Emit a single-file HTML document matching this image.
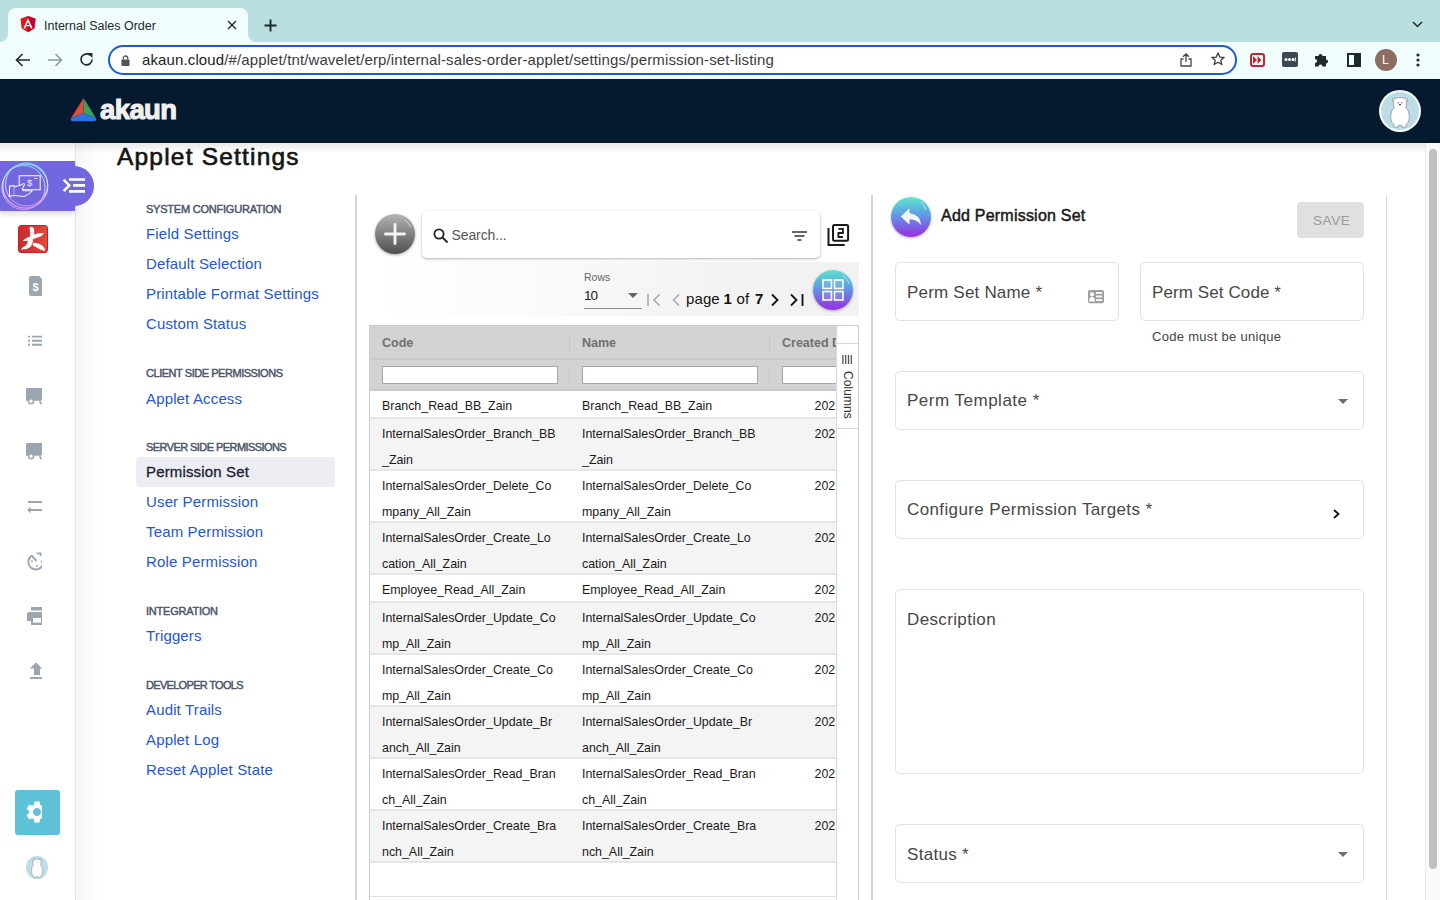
<!DOCTYPE html>
<html><head><meta charset="utf-8">
<style>
*{box-sizing:border-box;margin:0;padding:0}
html,body{width:1440px;height:900px;overflow:hidden;background:#fff;font-family:"Liberation Sans",sans-serif}
.a{position:absolute}
.t{position:absolute;line-height:1;white-space:nowrap}
svg{position:absolute;overflow:visible}
.sh{font-size:11px;font-weight:400;color:#4a5568;-webkit-text-stroke:0.45px #4a5568}
.rc{font-size:12.4px;color:#1a1a1a}
.th{font-size:12.5px;font-weight:700;color:#707070;position:absolute}
.fi{height:18px;background:#fff;border:1px solid #9fabab}
.fb{border:1px solid #e2e2e2;border-radius:5px;background:#fff}
.fl{font-size:17px;color:#474747;letter-spacing:0.2px}
.ml{font-size:15px;letter-spacing:0.15px;color:#2556d3}
</style></head><body>

<!-- ============ CHROME TAB STRIP ============ -->
<div class="a" style="left:0;top:0;width:1440px;height:42px;background:#badfdf"></div>
<div class="a" id="tab" style="left:8px;top:8px;width:240px;height:35px;background:#f1fcfc;border-radius:8px 8px 0 0"></div>
<!-- tab bottom curves -->
<div class="a" style="left:0;top:34px;width:8px;height:8px;background:#f1fcfc"></div>
<div class="a" style="left:0;top:26px;width:8px;height:16px;background:#badfdf;border-radius:0 0 8px 0"></div>
<div class="a" style="left:248px;top:34px;width:8px;height:8px;background:#f1fcfc"></div>
<div class="a" style="left:248px;top:26px;width:8px;height:16px;background:#badfdf;border-radius:0 0 0 8px"></div>

<!-- angular favicon -->
<svg style="left:20px;top:16px" width="16" height="17" viewBox="0 0 16 17">
  <path d="M8 0 L15.5 2.7 L14.3 12.6 L8 16.2 L1.7 12.6 L0.5 2.7Z" fill="#dd1b16"/>
  <path d="M8 0 L15.5 2.7 L14.3 12.6 L8 16.2Z" fill="#c3002f"/>
  <path d="M8 2.2 L3.3 12.6 H5.1 L6 10.3 H10 L10.9 12.6 H12.7 Z M8 5.9 L9.4 9 H6.6Z" fill="#fff"/>
</svg>
<div class="t" style="left:44px;top:19.5px;font-size:12.5px;color:#1f2a2a">Internal Sales Order</div>
<!-- close x -->
<svg style="left:227px;top:20px" width="10" height="10" viewBox="0 0 10 10"><path d="M1 1L9 9M9 1L1 9" stroke="#1f2a2a" stroke-width="1.4"/></svg>
<!-- plus -->
<svg style="left:264px;top:19px" width="13" height="13" viewBox="0 0 13 13"><path d="M6.5 0.5V12.5M0.5 6.5H12.5" stroke="#1a2828" stroke-width="1.9"/></svg>
<!-- chevron down right -->
<svg style="left:1412px;top:21px" width="11" height="7" viewBox="0 0 11 7"><path d="M1 1L5.5 5.5L10 1" stroke="#1f2a2a" stroke-width="1.5" fill="none"/></svg>

<!-- ============ TOOLBAR ============ -->
<div class="a" style="left:0;top:42px;width:1440px;height:37px;background:#f1fcfc"></div>
<!-- back -->
<svg style="left:14.5px;top:52.5px" width="16" height="14" viewBox="0 0 16 14"><path d="M15 7H2M7.5 1L1.5 7L7.5 13" stroke="#1f2a2a" stroke-width="1.6" fill="none"/></svg>
<!-- fwd -->
<svg style="left:46.5px;top:52.5px" width="16" height="14" viewBox="0 0 16 14"><path d="M1 7H14M8.5 1L14.5 7L8.5 13" stroke="#8a9a9a" stroke-width="1.5" fill="none"/></svg>
<!-- reload -->
<svg style="left:79px;top:52px" width="15" height="15" viewBox="0 0 15 15"><path d="M13 7.5A5.5 5.5 0 1 1 11 3.2" stroke="#1f2a2a" stroke-width="1.7" fill="none"/><path d="M8.5 1H13.5V6Z" fill="#1f2a2a"/></svg>

<!-- address bar -->
<div class="a" style="left:108px;top:45px;width:1129px;height:30px;background:#fff;border:2px solid #1b5bd4;border-radius:15px"></div>
<!-- lock -->
<svg style="left:121px;top:55px" width="9" height="11" viewBox="0 0 10 12"><path d="M2.5 5V3.5A2.5 2.5 0 0 1 7.5 3.5V5" stroke="#555" stroke-width="1.4" fill="none"/><rect x="0.5" y="5" width="9" height="7" rx="1" fill="#555"/></svg>
<div class="t" style="left:142px;top:52px;font-size:15px;letter-spacing:0.12px;color:#202124">akaun.cloud<span style="color:#3c3c3c">/#/applet/tnt/wavelet/erp/internal-sales-order-applet/settings/permission-set-listing</span></div>
<!-- share -->
<svg style="left:1180px;top:53px" width="12" height="14" viewBox="0 0 12 14"><path d="M3.5 6H1V13H11V6H8.5M6 9V1M3 3.8L6 1L9 3.8" stroke="#444" stroke-width="1.3" fill="none"/></svg>
<!-- star -->
<svg style="left:1211px;top:52px" width="14" height="14" viewBox="0 0 14 14"><path d="M7 1L8.8 5.1L13.2 5.4L9.8 8.3L10.9 12.6L7 10.3L3.1 12.6L4.2 8.3L0.8 5.4L5.2 5.1Z" stroke="#333" stroke-width="1.2" fill="none" stroke-linejoin="round"/></svg>
<!-- red ext -->
<div class="a" style="left:1250px;top:53px;width:15px;height:14px;border:2px solid #c0262d;border-radius:3px;background:#fff"></div>
<svg style="left:1253px;top:56px" width="9" height="8" viewBox="0 0 9 8"><path d="M0 0L4 4L0 8ZM4.5 0L8.5 4L4.5 8Z" fill="#c0262d"/></svg>
<!-- dark ext -->
<div class="a" style="left:1282px;top:52px;width:16px;height:15px;background:#3d4752;border-radius:2px"></div>
<svg style="left:1284px;top:57px" width="12" height="5" viewBox="0 0 12 5"><circle cx="2" cy="2.5" r="1.5" fill="#fff"/><circle cx="5.5" cy="2.5" r="1.5" fill="#fff"/><circle cx="9" cy="2.5" r="1.5" fill="#fff"/><rect x="10.8" y="0.5" width="1" height="4" fill="#fff"/></svg>
<!-- puzzle -->
<svg style="left:1314px;top:52px" width="16" height="15" viewBox="0 0 16 15"><path d="M1 4H4.5A2 2 0 1 1 8.5 4H12V7.5A2 2 0 1 1 12 11.5V14.5H8.5A2 2 0 1 0 4.5 14.5H1V11A2 2 0 1 0 1 7Z" fill="#1f2a2a"/></svg>
<!-- side panel -->
<div class="a" style="left:1347px;top:53px;width:14px;height:14px;border:2px solid #1f2a2a"></div>
<div class="a" style="left:1354px;top:53px;width:7px;height:14px;background:#1f2a2a"></div>
<!-- avatar L -->
<div class="a" style="left:1375px;top:49px;width:22px;height:22px;border-radius:50%;background:#8d6e63"></div>
<div class="t" style="left:1382px;top:54px;font-size:12px;color:#fff">L</div>
<!-- dots -->
<svg style="left:1416px;top:53px" width="4" height="14" viewBox="0 0 4 14"><circle cx="2" cy="2" r="1.6" fill="#1f2a2a"/><circle cx="2" cy="7" r="1.6" fill="#1f2a2a"/><circle cx="2" cy="12" r="1.6" fill="#1f2a2a"/></svg>

<!-- ============ APP HEADER ============ -->
<div class="a" style="left:0;top:79px;width:1440px;height:64px;background:#05192f"></div>

<!-- logo -->
<svg style="left:70px;top:97px" width="28" height="26" viewBox="70 97 28 26">
  <path d="M83.6 98 L70.8 118.6 L83.6 113Z" fill="#d9503a"/>
  <path d="M83.6 98 L96.2 118.6 L83.6 113Z" fill="#3e9e5c"/>
  <path d="M70.8 118.6 L83.6 113 L96.2 118.6 Q96.5 121.2 94 121.2 H73 Q70.5 121.2 70.8 118.6Z" fill="#2f72e4"/>
</svg>
<div class="t" style="left:100px;top:96px;font-size:27.5px;font-weight:700;color:#f0f0f0;letter-spacing:-0.6px;-webkit-text-stroke:1.1px #f0f0f0">akaun</div>
<!-- header avatar -->
<div class="a" style="left:1379px;top:90px;width:42px;height:42px;border-radius:50%;background:#fff"></div>
<div class="a" style="left:1381px;top:92px;width:38px;height:38px;border-radius:50%;background:#bcdde8;overflow:hidden">
  <svg style="left:0;top:0" width="38" height="38" viewBox="0 0 38 38"><g fill="#fff" stroke="#666" stroke-width="0.5"><circle cx="13.3" cy="8" r="2"/><circle cx="24.7" cy="8" r="2"/><path d="M12.5 10Q12.5 5.5 19 5.5Q25.5 5.5 25.5 10Q26 13.5 24.8 15.5Q28.6 18.5 28.2 26.5Q27.8 31 25.2 32.2V35.2H21.2L20.8 33.5H17.2L16.8 35.2H12.8V32.2Q10.2 31 9.8 26.5Q9.4 18.5 13.2 15.5Q12 13.5 12.5 10Z"/></g><circle cx="17" cy="10.8" r="0.6" fill="#222"/><circle cx="21" cy="10.8" r="0.6" fill="#222"/><ellipse cx="19" cy="12.8" rx="1" ry="0.7" fill="#222"/></svg>
</div>


<!-- ============ LEFT ICON SIDEBAR ============ -->
<div class="a" style="left:0;top:143px;width:75px;height:757px;background:#fff"></div>
<div class="a" style="left:75px;top:143px;width:30px;height:757px;background:linear-gradient(90deg,#e4e4e4 0,#e4e4e4 1px,#f7f7f7 1px,#f9f9f9 8px,#fdfdfd 18px,#fff 28px)"></div>
<!-- header shadow -->

<div class="a" style="left:0;top:143px;width:1425px;height:10px;background:linear-gradient(rgba(0,0,0,0.09),rgba(0,0,0,0))"></div>
<!-- purple pill -->
<div class="a" style="left:0;top:161px;width:75px;height:50px;background:#7367df;box-shadow:0 3px 6px rgba(0,0,0,0.15)"></div>
<div class="a" style="left:54px;top:166px;width:40px;height:40px;border-radius:20px;background:#7367df"></div>
<svg style="left:0;top:155px" width="60" height="60" viewBox="0 155 60 60">
  <defs><linearGradient id="rg" x1="0" y1="0" x2="0" y2="1"><stop offset="0" stop-color="#8ae6f2"/><stop offset="0.45" stop-color="#d8e8f8"/><stop offset="1" stop-color="#e79cf2"/></linearGradient></defs>
  <g fill="none" stroke="url(#rg)">
  <ellipse cx="25.3" cy="186" rx="22.5" ry="22" stroke-width="1.1"/>
  <ellipse cx="23.5" cy="187.5" rx="21.5" ry="22" stroke-width="0.9"/>
  <ellipse cx="26.5" cy="184.5" rx="21" ry="21.5" stroke-width="0.9"/>
  </g>
  <rect x="19.2" y="175.7" width="21" height="14" stroke="#f4f0ff" stroke-width="1.1" fill="none"/>
  <path d="M34.3 178.4H37.3" stroke="#f4f0ff" stroke-width="1"/>
  <text x="27" y="186.3" font-family="Liberation Sans" font-size="9.5" font-weight="400" fill="#f4f0ff">$</text>
  <path d="M9.5 186L14.3 185.6L14.3 195.5L9.5 196.4Z" stroke="#f4f0ff" stroke-width="1.1" fill="#7367df"/>
  <path d="M14.3 187L21.5 184.8Q24.5 182.5 24.5 184.5L22.2 189.5Q22.8 190.7 25 190.7H32.2Q30 193.8 24 196.5L14.3 195.5" stroke="#f4f0ff" stroke-width="1.1" fill="#7367df"/>
</svg>
<!-- menu-open icon -->
<svg style="left:62px;top:176px" width="24" height="18" viewBox="0 0 24 18">
  <path d="M1.6 3.6L7.3 9.4L1.6 15.2" stroke="#fff" stroke-width="2.5" fill="none"/>
  <path d="M7 3.5H23M11 9.4H23M7 15.4H23" stroke="#fff" stroke-width="2.6"/>
</svg>

<!-- red app icon -->
<div class="a" style="left:18px;top:224.5px;width:30px;height:28.5px;border-radius:3px;background:linear-gradient(90deg,#c52c2e,#d93a35 60%,#e14a3b);border:1px solid #d01c1c"></div>
<svg style="left:18px;top:224.5px" width="30" height="29" viewBox="0 0 30 29">
  <path d="M12 2.5Q14.5 1.5 15.5 3.5L15.8 8.5Q14.5 11 15 13Q14.5 18 12.5 21.5Q9 24.5 3.5 24Q5 22 8 21Q10 19 10.5 15Q8.5 15.8 5.5 15.5Q9 12.5 12.5 12Q13 8 12 2.5Z" fill="#fff" stroke="#fff" stroke-width="0.9" stroke-linejoin="round"/>
  <path d="M14.5 10.5Q20 8 25.5 8.5Q24 11 20 12Q17 13 14.5 13.8Z" fill="#fff" stroke="#fff" stroke-width="0.8" stroke-linejoin="round"/>
  <path d="M15.5 18Q21 18.5 24.5 21Q27 24 26.5 25.5Q22 24.5 15 20Z" fill="#fff" stroke="#fff" stroke-width="0.8" stroke-linejoin="round"/>
</svg>

<!-- gray sidebar icons (clipped) -->
<div class="a" style="left:0;top:143px;width:42px;height:640px;overflow:hidden">
  <!-- receipt -->
  <svg style="left:29px;top:133px" width="15" height="20" viewBox="0 0 15 20"><path d="M2 0H10L15 5V18Q15 20 13 20H2Q0 20 0 18V2Q0 0 2 0Z" fill="#9aa6b0"/><text x="3.5" y="15" font-family="Liberation Sans" font-size="11" font-weight="700" fill="#fff">$</text></svg>
  <!-- list -->
  <svg style="left:28px;top:193px" width="16" height="11" viewBox="0 0 16 11"><path d="M0 0.6H2M0 4.7H2M0 8.8H2M4 0.6H16M4 4.7H16M4 8.8H16" stroke="#9aa6b0" stroke-width="1.9"/></svg>
  <!-- truck -->
  <svg style="left:26px;top:245px" width="20" height="17" viewBox="0 0 20 17"><path d="M0 1.2Q0 0 1.2 0H20V12.8H0Z" fill="#9aa6b0"/><circle cx="5" cy="13.2" r="2.5" fill="#fff" stroke="#9aa6b0" stroke-width="1.5"/><circle cx="16.5" cy="13.2" r="2.5" fill="#fff" stroke="#9aa6b0" stroke-width="1.5"/></svg>
  <svg style="left:26px;top:300px" width="20" height="17" viewBox="0 0 20 17"><path d="M0 1.2Q0 0 1.2 0H20V12.8H0Z" fill="#9aa6b0"/><circle cx="5" cy="13.2" r="2.5" fill="#fff" stroke="#9aa6b0" stroke-width="1.5"/><circle cx="16.5" cy="13.2" r="2.5" fill="#fff" stroke="#9aa6b0" stroke-width="1.5"/></svg>
  <!-- arrows -->
  <svg style="left:0;top:0" width="45" height="440" viewBox="0 143 45 440"><rect x="28" y="501" width="15" height="2" fill="#9aa6b0"/><rect x="30" y="509" width="13" height="2" fill="#9aa6b0"/><path d="M27.3 510L30.5 506.5V513.5Z" fill="#9aa6b0"/></svg>
  <!-- speed -->
  <svg style="left:0;top:0" width="45" height="440" viewBox="0 143 45 440"><path d="M31.8 555.5A7.6 7.6 0 1 0 42.6 565.5" stroke="#9aa6b0" stroke-width="1.9" fill="none"/><path d="M31.6 555.6L36.6 561" stroke="#9aa6b0" stroke-width="1.9"/><path d="M36.5 553.3H40.6V556" stroke="#9aa6b0" stroke-width="1.8" fill="none"/><circle cx="32" cy="561.3" r="0.95" fill="#9aa6b0"/><circle cx="37" cy="566" r="0.95" fill="#9aa6b0"/><circle cx="41.6" cy="561.3" r="0.95" fill="#9aa6b0"/></svg>
  <!-- printer -->
  <svg style="left:0;top:0" width="45" height="600" viewBox="0 143 45 600"><rect x="31" y="607" width="11" height="3.5" fill="#9aa6b0"/><path d="M27 614Q27 612 29 612H42V625H31V621H27Z" fill="#9aa6b0"/><rect x="33" y="618" width="8" height="4.6" fill="#fff"/></svg>
  <!-- upload -->
  <svg style="left:0;top:0" width="45" height="600" viewBox="0 143 45 600"><path d="M36 662.3L42.3 668.6H40V675H34V668.6H29.7Z" fill="#9aa6b0"/><rect x="30" y="677" width="12" height="2" fill="#9aa6b0"/></svg>
</div>

<!-- gear button -->
<div class="a" style="left:15px;top:790px;width:45px;height:45px;border-radius:3px;background:#5ec2d8"></div>
<div class="a" style="left:20px;top:795px;width:22px;height:35px;overflow:hidden"><svg style="left:-20px;top:-795px" width="60" height="840" viewBox="0 0 60 840"><g transform="translate(23.8 798.8) scale(1.1)"><path fill="#fff" fill-rule="evenodd" d="M19.14,12.94c0.04-0.3,0.06-0.61,0.06-0.94c0-0.32-0.02-0.64-0.07-0.94l2.03-1.58c0.18-0.14,0.23-0.41,0.12-0.61 l-1.92-3.32c-0.12-0.22-0.37-0.29-0.59-0.22l-2.39,0.96c-0.5-0.38-1.03-0.7-1.62-0.94L14.4,2.81c-0.04-0.24-0.24-0.41-0.48-0.41 h-3.84c-0.24,0-0.43,0.17-0.47,0.41L9.25,5.35C8.66,5.59,8.12,5.92,7.63,6.29L5.24,5.33c-0.22-0.08-0.47,0-0.59,0.22L2.74,8.87 C2.62,9.08,2.66,9.34,2.86,9.48l2.03,1.58C4.84,11.36,4.8,11.69,4.8,12s0.02,0.64,0.07,0.94l-2.03,1.58 c-0.18,0.14-0.23,0.41-0.12,0.61l1.92,3.32c0.12,0.22,0.37,0.29,0.59,0.22l2.39-0.96c0.5,0.38,1.03,0.7,1.62,0.94l0.36,2.54 c0.05,0.24,0.24,0.41,0.48,0.41h3.84c0.24,0,0.44-0.17,0.47-0.41l0.36-2.54c0.59-0.24,1.13-0.56,1.62-0.94l2.39,0.96 c0.22,0.08,0.47,0,0.59-0.22l1.92-3.32c0.12-0.22,0.07-0.47-0.12-0.61L19.14,12.94z M12,15.6c-1.98,0-3.6-1.62-3.6-3.6 s1.62-3.6,3.6-3.6s3.6,1.62,3.6,3.6S13.98,15.6,12,15.6z"/></g></svg></div>
<!-- small avatar -->
<div class="a" style="left:26px;top:856px;width:22px;height:23px;border-radius:50%;background:#bcdde8;overflow:hidden">
 <svg style="left:0;top:0" width="22" height="23" viewBox="0 0 22 23"><g fill="#fff" stroke="#777" stroke-width="0.45"><circle cx="7.8" cy="4.2" r="1.3"/><circle cx="14.2" cy="4.2" r="1.3"/><path d="M7 5.5Q7 3 11 3Q15 3 15 5.5Q15.3 7.5 14.5 8.8Q16.8 10.5 16.5 16Q16.2 19 14.8 19.8V21.5H12.3L12 20.5H10L9.7 21.5H7.2V19.8Q5.8 19 5.5 16Q5.2 10.5 7.5 8.8Q6.7 7.5 7 5.5Z"/></g><circle cx="9.6" cy="6" r="0.35" fill="#333"/><circle cx="12.4" cy="6" r="0.35" fill="#333"/></svg>
</div>

<!-- ============ PAGE CONTENT ============ -->
<div class="t" style="left:117px;top:144.9px;font-size:24.5px;font-weight:400;letter-spacing:1.2px;color:#141414;-webkit-text-stroke:0.65px #141414">Applet Settings</div>

<!-- settings menu -->
<div class="t sh" style="left:146px;top:203.9px;letter-spacing:-0.22px">SYSTEM CONFIGURATION</div>
<div class="t ml" style="left:146px;top:225.5px">Field Settings</div>
<div class="t ml" style="left:146px;top:255.5px">Default Selection</div>
<div class="t ml" style="left:146px;top:285.5px">Printable Format Settings</div>
<div class="t ml" style="left:146px;top:315.5px">Custom Status</div>
<div class="t sh" style="left:146px;top:367.9px;letter-spacing:-0.46px">CLIENT SIDE PERMISSIONS</div>
<div class="t ml" style="left:146px;top:390.5px">Applet Access</div>
<div class="t sh" style="left:146px;top:441.9px;letter-spacing:-0.57px">SERVER SIDE PERMISSIONS</div>
<div class="a" style="left:136px;top:457px;width:199px;height:30px;border-radius:4px;background:#ebedf2"></div>
<div class="t ml" style="left:146px;top:463.5px;color:#1a2233;-webkit-text-stroke:0.3px #1a2233">Permission Set</div>
<div class="t ml" style="left:146px;top:493.5px">User Permission</div>
<div class="t ml" style="left:146px;top:523.5px">Team Permission</div>
<div class="t ml" style="left:146px;top:553.5px">Role Permission</div>
<div class="t sh" style="left:146px;top:605.9px;letter-spacing:-0.23px">INTEGRATION</div>
<div class="t ml" style="left:146px;top:627.5px">Triggers</div>
<div class="t sh" style="left:146px;top:679.9px;letter-spacing:-0.69px">DEVELOPER TOOLS</div>
<div class="t ml" style="left:146px;top:701.5px">Audit Trails</div>
<div class="t ml" style="left:146px;top:731.5px">Applet Log</div>
<div class="t ml" style="left:146px;top:761.5px">Reset Applet State</div>


<!-- ============ TABLE PANEL ============ -->
<!-- plus button -->
<div class="a" style="left:375px;top:214px;width:40px;height:40px;border-radius:50%;background:linear-gradient(#b4b4b4,#4e4e4e);box-shadow:0 1px 3px rgba(0,0,0,0.35)"></div>
<svg style="left:375px;top:214px" width="40" height="40" viewBox="0 0 40 40"><path d="M30 6 Q34 9 36 13" stroke="#e8e8e8" stroke-width="0.8" fill="none"/><path d="M20 10.5V29.5M10.5 20H29.5" stroke="#f4f4f4" stroke-width="2.9" stroke-linecap="round"/></svg>
<!-- search box -->
<div class="a" style="left:422px;top:210.5px;width:398px;height:47.5px;border-radius:5px;background:#fff;box-shadow:0 1px 3px rgba(0,0,0,0.3)"></div>
<svg style="left:433px;top:228px" width="16" height="16" viewBox="0 0 16 16"><circle cx="6" cy="6" r="4.6" stroke="#222" stroke-width="1.8" fill="none"/><path d="M9.4 9.4L14.5 14.5" stroke="#222" stroke-width="2"/></svg>
<div class="t" style="left:451.5px;top:227.8px;font-size:14px;letter-spacing:-0.1px;color:#555">Search...</div>
<svg style="left:792px;top:231px" width="15" height="10" viewBox="0 0 15 10"><path d="M0 1H15M2.5 5H12.5M5.5 9H9.5" stroke="#333" stroke-width="1.6"/></svg>
<svg style="left:827px;top:223px" width="24" height="24" viewBox="0 0 24 24"><path d="M1.5 5.1V21.9H17.7" stroke="#1a1a1a" stroke-width="2" fill="none"/><rect x="6" y="2.1" width="15.1" height="15.6" rx="1.5" stroke="#1a1a1a" stroke-width="2" fill="none"/><path d="M11.4 5.8H15.9V10H11.4V14H15.9" stroke="#1a1a1a" stroke-width="1.8" fill="none"/></svg>

<!-- pagination band -->
<div class="a" style="left:370px;top:262px;width:489px;height:54px;background:linear-gradient(90deg,#ffffff 0%,#fbfbfb 30%,#f3f3f3 70%,#f2f2f2 100%)"></div>
<div class="t" style="left:584px;top:272px;font-size:10.5px;color:#666">Rows</div>
<div class="t" style="left:584px;top:288.8px;font-size:13.5px;letter-spacing:-1px;color:#222">10</div>
<div class="a" style="left:584px;top:308px;width:58px;height:1px;background:#8a8a8a"></div>
<svg style="left:628px;top:293px" width="10" height="5" viewBox="0 0 10 5"><path d="M0 0H10L5 5Z" fill="#666"/></svg>
<svg style="left:647px;top:293px" width="14" height="14" viewBox="0 0 14 14"><path d="M1 1V13M12.5 1.5L7 7L12.5 12.5" stroke="#aaa" stroke-width="1.6" fill="none"/></svg>
<svg style="left:672px;top:293px" width="8" height="14" viewBox="0 0 8 14"><path d="M7 1.5L1.5 7L7 12.5" stroke="#aaa" stroke-width="1.6" fill="none"/></svg>
<div class="t" style="left:686px;top:290.8px;font-size:15px;letter-spacing:0.1px;color:#111">page</div>
<div class="t" style="left:723.5px;top:290.8px;font-size:15px;font-weight:700;color:#111">1</div>
<div class="t" style="left:736.5px;top:290.8px;font-size:15px;letter-spacing:0.2px;color:#111">of</div>
<div class="t" style="left:755px;top:290.8px;font-size:15px;font-weight:700;color:#111">7</div>
<svg style="left:771px;top:293px" width="8" height="14" viewBox="0 0 8 14"><path d="M1 1.5L6.5 7L1 12.5" stroke="#111" stroke-width="1.8" fill="none"/></svg>
<svg style="left:790px;top:293px" width="14" height="14" viewBox="0 0 14 14"><path d="M1 1.5L6.5 7L1 12.5M12.5 1V13" stroke="#111" stroke-width="1.8" fill="none"/></svg>
<!-- grid button -->
<div class="a" style="left:813px;top:269.5px;width:40px;height:40px;border-radius:50%;background:linear-gradient(#5ae6c8,#5b9ae6 45%,#8f3fe0 90%,#9a36de);box-shadow:0 1px 3px rgba(0,0,0,0.3)"></div>
<svg style="left:813px;top:269.5px" width="40" height="40" viewBox="0 0 40 40"><path d="M30 5 Q35 9 36 14" stroke="#cfeff0" stroke-width="0.7" fill="none"/><g stroke="#fff" stroke-width="1.6" fill="rgba(255,255,255,0.12)"><rect x="10" y="10" width="8.5" height="8.5"/><rect x="21.5" y="10" width="8.5" height="8.5"/><rect x="10" y="21.5" width="8.5" height="8.5"/><rect x="21.5" y="21.5" width="8.5" height="8.5"/></g></svg>

<!-- table -->
<div class="a" style="left:369px;top:325px;width:490px;height:575px;border:1px solid #c8ced3;border-bottom:none;background:#fff"></div>
<div class="a" style="left:370px;top:326px;width:467px;height:34px;background:#d3d3d3;border-bottom:2px solid #c6cbce"></div>
<div class="a" style="left:370px;top:360px;width:467px;height:31px;background:#d3d3d3;border-bottom:2px solid #c6cbce"></div>
<div class="a" style="left:569px;top:334px;width:1px;height:18px;background:#c4c4c4"></div>
<div class="a" style="left:769px;top:334px;width:1px;height:18px;background:#c4c4c4"></div>
<div class="a" style="left:569px;top:367px;width:1px;height:16px;background:#c8c8c8"></div>
<div class="a" style="left:769px;top:367px;width:1px;height:16px;background:#c8c8c8"></div>
<div class="t th" style="left:382px;top:336.5px">Code</div>
<div class="t th" style="left:582px;top:336.5px">Name</div>
<div class="a" style="left:770px;top:326px;width:67px;height:32px;overflow:hidden"><div class="t th" style="left:12px;top:10.5px">Created Date</div></div>
<div class="a fi" style="left:382px;top:366px;width:176px"></div>
<div class="a fi" style="left:582px;top:366px;width:176px"></div>
<div class="a fi" style="left:782px;top:366px;width:60px;border-right:none"></div>
<div class="a" style="left:370px;top:391px;width:467px;height:509px;overflow:hidden"><div class="a" style="left:-370px;top:-391px;width:1440px;height:900px">
<div class="a" style="left:370px;top:391px;width:467px;height:28px;background:#fff;border-bottom:2px solid #e4e7e9"></div>
<div class="t rc" style="left:382px;top:400.3px">Branch_Read_BB_Zain</div>
<div class="t rc" style="left:582px;top:400.3px">Branch_Read_BB_Zain</div>
<div class="t rc" style="left:814.5px;top:400.3px">2021</div>
<div class="a" style="left:370px;top:419px;width:467px;height:52px;background:#f4f4f4;border-bottom:2px solid #e4e7e9"></div>
<div class="t rc" style="left:382px;top:428.3px">InternalSalesOrder_Branch_BB</div>
<div class="t rc" style="left:582px;top:428.3px">InternalSalesOrder_Branch_BB</div>
<div class="t rc" style="left:814.5px;top:428.3px">2021</div>
<div class="t rc" style="left:382px;top:454.3px">_Zain</div>
<div class="t rc" style="left:582px;top:454.3px">_Zain</div>
<div class="a" style="left:370px;top:471px;width:467px;height:52px;background:#fff;border-bottom:2px solid #e4e7e9"></div>
<div class="t rc" style="left:382px;top:480.3px">InternalSalesOrder_Delete_Co</div>
<div class="t rc" style="left:582px;top:480.3px">InternalSalesOrder_Delete_Co</div>
<div class="t rc" style="left:814.5px;top:480.3px">2021</div>
<div class="t rc" style="left:382px;top:506.3px">mpany_All_Zain</div>
<div class="t rc" style="left:582px;top:506.3px">mpany_All_Zain</div>
<div class="a" style="left:370px;top:523px;width:467px;height:52px;background:#f4f4f4;border-bottom:2px solid #e4e7e9"></div>
<div class="t rc" style="left:382px;top:532.3px">InternalSalesOrder_Create_Lo</div>
<div class="t rc" style="left:582px;top:532.3px">InternalSalesOrder_Create_Lo</div>
<div class="t rc" style="left:814.5px;top:532.3px">2021</div>
<div class="t rc" style="left:382px;top:558.3px">cation_All_Zain</div>
<div class="t rc" style="left:582px;top:558.3px">cation_All_Zain</div>
<div class="a" style="left:370px;top:575px;width:467px;height:28px;background:#fff;border-bottom:2px solid #e4e7e9"></div>
<div class="t rc" style="left:382px;top:584.3px">Employee_Read_All_Zain</div>
<div class="t rc" style="left:582px;top:584.3px">Employee_Read_All_Zain</div>
<div class="t rc" style="left:814.5px;top:584.3px">2021</div>
<div class="a" style="left:370px;top:603px;width:467px;height:52px;background:#f4f4f4;border-bottom:2px solid #e4e7e9"></div>
<div class="t rc" style="left:382px;top:612.3px">InternalSalesOrder_Update_Co</div>
<div class="t rc" style="left:582px;top:612.3px">InternalSalesOrder_Update_Co</div>
<div class="t rc" style="left:814.5px;top:612.3px">2021</div>
<div class="t rc" style="left:382px;top:638.3px">mp_All_Zain</div>
<div class="t rc" style="left:582px;top:638.3px">mp_All_Zain</div>
<div class="a" style="left:370px;top:655px;width:467px;height:52px;background:#fff;border-bottom:2px solid #e4e7e9"></div>
<div class="t rc" style="left:382px;top:664.3px">InternalSalesOrder_Create_Co</div>
<div class="t rc" style="left:582px;top:664.3px">InternalSalesOrder_Create_Co</div>
<div class="t rc" style="left:814.5px;top:664.3px">2021</div>
<div class="t rc" style="left:382px;top:690.3px">mp_All_Zain</div>
<div class="t rc" style="left:582px;top:690.3px">mp_All_Zain</div>
<div class="a" style="left:370px;top:707px;width:467px;height:52px;background:#f4f4f4;border-bottom:2px solid #e4e7e9"></div>
<div class="t rc" style="left:382px;top:716.3px">InternalSalesOrder_Update_Br</div>
<div class="t rc" style="left:582px;top:716.3px">InternalSalesOrder_Update_Br</div>
<div class="t rc" style="left:814.5px;top:716.3px">2021</div>
<div class="t rc" style="left:382px;top:742.3px">anch_All_Zain</div>
<div class="t rc" style="left:582px;top:742.3px">anch_All_Zain</div>
<div class="a" style="left:370px;top:759px;width:467px;height:52px;background:#fff;border-bottom:2px solid #e4e7e9"></div>
<div class="t rc" style="left:382px;top:768.3px">InternalSalesOrder_Read_Bran</div>
<div class="t rc" style="left:582px;top:768.3px">InternalSalesOrder_Read_Bran</div>
<div class="t rc" style="left:814.5px;top:768.3px">2021</div>
<div class="t rc" style="left:382px;top:794.3px">ch_All_Zain</div>
<div class="t rc" style="left:582px;top:794.3px">ch_All_Zain</div>
<div class="a" style="left:370px;top:811px;width:467px;height:52px;background:#f4f4f4;border-bottom:2px solid #e4e7e9"></div>
<div class="t rc" style="left:382px;top:820.3px">InternalSalesOrder_Create_Bra</div>
<div class="t rc" style="left:582px;top:820.3px">InternalSalesOrder_Create_Bra</div>
<div class="t rc" style="left:814.5px;top:820.3px">2021</div>
<div class="t rc" style="left:382px;top:846.3px">nch_All_Zain</div>
<div class="t rc" style="left:582px;top:846.3px">nch_All_Zain</div>
</div></div>
<!-- empty row + bottom line -->
<div class="a" style="left:370px;top:896px;width:467px;height:1px;background:#dde1e4"></div>
<!-- columns side panel -->
<div class="a" style="left:836px;top:326px;width:22px;height:574px;background:#fff;border-left:1px solid #d5dadd"></div>
<div class="a" style="left:836px;top:343px;width:22px;height:86px;border-top:1px solid #d5dadd;border-bottom:1px solid #d5dadd"></div>
<svg style="left:842px;top:355px" width="11" height="9" viewBox="0 0 11 9"><path d="M0.9 0V9M3.7 0V9M6.5 0V9M9.3 0V9" stroke="#555" stroke-width="1.3"/></svg>
<div class="t" style="left:842px;top:371px;font-size:12px;color:#333;writing-mode:vertical-rl;letter-spacing:0.05px">Columns</div>

<!-- ============ FORM PANEL ============ -->
<div class="a" style="left:891px;top:197px;width:40px;height:40px;border-radius:50%;background:linear-gradient(#5ee8cc,#5f9ae6 45%,#8f3fe0 90%,#9a36de);box-shadow:0 1px 3px rgba(0,0,0,0.3)"></div>
<svg style="left:891px;top:197px" width="40" height="40" viewBox="0 0 40 40"><path d="M29.5 5 Q33.5 8 35 13" stroke="#9ff0f0" stroke-width="1" fill="none"/><path d="M18.5 11.3 L9.8 19.5 L18.5 27.7 V22.3 Q25.5 22 30.3 28.3 Q29.5 17.5 18.5 16.3Z" fill="#f4f4f4"/></svg>
<div class="t" style="left:941px;top:207.5px;font-size:16px;font-weight:400;letter-spacing:0.22px;color:#1a1a1a;-webkit-text-stroke:0.5px #1a1a1a">Add Permission Set</div>
<div class="a" style="left:1297px;top:202px;width:67px;height:36px;border-radius:4px;background:#e0e0e0"></div>
<div class="t" style="left:1313px;top:213.7px;font-size:13.5px;letter-spacing:0.6px;color:#9a9a9a">SAVE</div>

<div class="a fb" style="left:895px;top:262px;width:224px;height:59px"></div>
<div class="t fl" style="left:907px;top:283.7px">Perm Set Name *</div>
<svg style="left:1088px;top:290px" width="16" height="13" viewBox="0 0 16 13"><rect x="0" y="0" width="16" height="13.2" rx="2" fill="#9e9e9e"/><circle cx="4" cy="4.3" r="2.1" fill="#fff"/><path d="M1.1 11.4Q1.1 7.1 4 7.1Q6.9 7.1 6.9 11.4Z" fill="#fff"/><rect x="8" y="2" width="6.2" height="1.8" fill="#fff"/><rect x="8" y="5.6" width="6.2" height="1.8" fill="#fff"/><rect x="8" y="9.2" width="6.2" height="1.8" fill="#fff"/></svg>
<div class="a fb" style="left:1140px;top:262px;width:224px;height:59px"></div>
<div class="t fl" style="left:1152px;top:283.7px;letter-spacing:0.1px">Perm Set Code *</div>
<div class="t" style="left:1152px;top:330px;font-size:13px;letter-spacing:0.3px;color:#444">Code must be unique</div>

<div class="a fb" style="left:895px;top:371px;width:469px;height:59px"></div>
<div class="t fl" style="left:907px;top:392.4px;letter-spacing:0.5px">Perm Template *</div>
<svg style="left:1338px;top:398.5px" width="10" height="5" viewBox="0 0 10 5"><path d="M0 0H10L5 5Z" fill="#707070"/></svg>

<div class="a fb" style="left:895px;top:480px;width:469px;height:59px"></div>
<div class="t fl" style="left:907px;top:501.2px;letter-spacing:0.38px">Configure Permission Targets *</div>
<svg style="left:1333px;top:509px" width="7" height="10" viewBox="0 0 7 10"><path d="M1 1L5.5 5L1 9" stroke="#111" stroke-width="1.8" fill="none"/></svg>

<div class="a fb" style="left:895px;top:589px;width:469px;height:185px"></div>
<div class="t fl" style="left:907px;top:611.2px;letter-spacing:0.36px">Description</div>

<div class="a fb" style="left:895px;top:824px;width:469px;height:59px"></div>
<div class="t fl" style="left:907px;top:846px;letter-spacing:0.3px">Status *</div>
<svg style="left:1338px;top:851.5px" width="10" height="5" viewBox="0 0 10 5"><path d="M0 0H10L5 5Z" fill="#707070"/></svg>

<!-- dividers -->
<div class="a" style="left:355px;top:195px;width:2px;height:705px;background:#d4d4d4"></div>
<div class="a" style="left:871px;top:195px;width:2px;height:705px;background:#d4d4d4"></div>
<div class="a" style="left:1386px;top:195px;width:1px;height:705px;background:#dcdcdc"></div>

<!-- scrollbar -->
<div class="a" style="left:1425px;top:143px;width:15px;height:757px;background:#fafafa;border-left:1px solid #e8e8e8"></div>
<div class="a" style="left:1429px;top:149px;width:8px;height:720px;border-radius:4px;background:#bfbfbf"></div>

</body></html>
